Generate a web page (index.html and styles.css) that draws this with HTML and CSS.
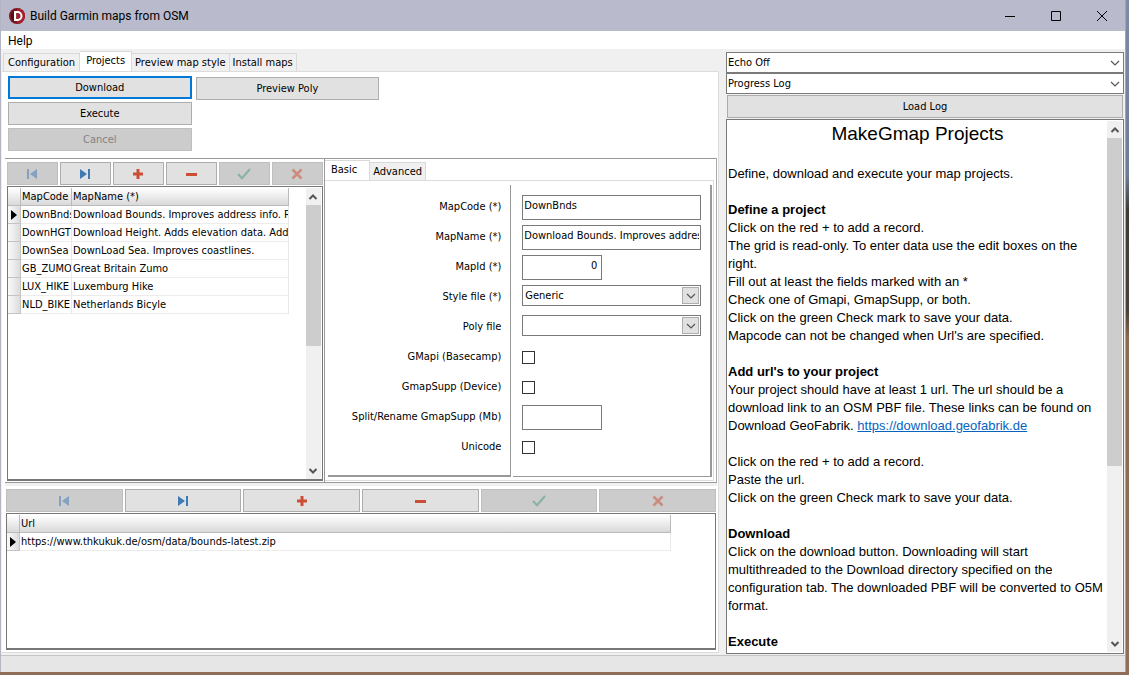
FILE: index.html
```html
<!DOCTYPE html>
<html lang="en">
<head>
<meta charset="utf-8">
<title>Build Garmin maps from OSM</title>
<link rel="stylesheet" href="styles.css">
</head>
<body>
<svg class="defs" aria-hidden="true">
  <symbol id="first" viewBox="0 0 12 12"><path fill="#3f7ab5" d="M1 1h2v10H1zM11 1v10L4 6z"/></symbol>
  <symbol id="last" viewBox="0 0 12 12"><path fill="#3f7ab5" d="M9 1h2v10H9zM1 1v10l7-5z"/></symbol>
  <symbol id="plus" viewBox="0 0 12 12"><path fill="#cb4f36" d="M4.500 1h3v3.500H11v3H7.500V11h-3V7.500H1v-3h3.500z"/></symbol>
  <symbol id="minus" viewBox="0 0 12 12"><path fill="#cb4f36" d="M1 5h11v3H1z"/></symbol>
  <symbol id="check" viewBox="0 0 14 12"><path fill="none" stroke="#439b7c" stroke-width="2" d="M1 6l4 4.200L13 1"/></symbol>
  <symbol id="cross" viewBox="0 0 12 12"><path fill="none" stroke="#cb4f36" stroke-width="2.600" d="M1.500 1.500l9 9M10.500 1.500l-9 9"/></symbol>
  <symbol id="chevron" viewBox="0 0 10 6"><path fill="none" stroke="#555" stroke-width="1.200" d="M1 1l4 4 4-4"/></symbol>
  <symbol id="up" viewBox="0 0 10 8"><path fill="none" stroke="#555" stroke-width="2" d="M1.500 6L5 2.500 8.500 6"/></symbol>
  <symbol id="down" viewBox="0 0 10 8"><path fill="none" stroke="#555" stroke-width="2" d="M1.500 2L5 5.500 8.500 2"/></symbol>
  <symbol id="marker" viewBox="0 0 6 10"><path d="M0 0l6 5-6 5z"/></symbol>
</svg>
<div class="window">
  <header class="titlebar">
    <svg class="logo" viewBox="0 0 16 16" aria-hidden="true"><circle cx="8" cy="8" r="8" fill="#7c1421"/><path d="M8 0a8 8 0 0 1 0 16z" fill="#a51f2c"/><path fill="#4d0c16" d="M2 8a6 6 0 0 1 3-5v10a6 6 0 0 1-3-5z"/><path fill="#fff" fill-rule="evenodd" d="M5 3h3.500a5 5 0 0 1 0 10H5zM7.200 5v6h1.300a3 3 0 0 0 0-6z"/></svg>
    <h1 class="title">Build Garmin maps from OSM</h1>
    <div class="controls">
      <button class="control" aria-label="Minimize"><svg viewBox="0 0 12 12"><path d="M1 6.500h10"/></svg></button>
      <button class="control" aria-label="Maximize"><svg viewBox="0 0 12 12"><path d="M1.500 1.500h9v9h-9z"/></svg></button>
      <button class="control" aria-label="Close"><svg viewBox="0 0 12 12"><path d="M1 1l10 10M11 1L1 11"/></svg></button>
    </div>
  </header>
  <nav class="menubar"><button class="menu">Help</button></nav>
  <main class="main">
    <section class="left">
      <div class="tabs" role="tablist">
        <button class="tab" role="tab">Configuration</button>
        <button class="tab active" role="tab" aria-selected="true">Projects</button>
        <button class="tab" role="tab">Preview map style</button>
        <button class="tab" role="tab">Install maps</button>
      </div>
      <div class="page">
        <div class="actions">
          <div class="action-column">
            <button class="button primary">Download</button>
            <button class="button">Execute</button>
            <button class="button" disabled>Cancel</button>
          </div>
          <div class="action-column second">
            <button class="button">Preview Poly</button>
          </div>
        </div>
        <div class="projects">
          <div class="records">
            <div class="navigator">
              <button class="button" aria-label="First project" disabled><svg class="icon"><use href="#first"/></svg></button>
              <button class="button" aria-label="Last project"><svg class="icon"><use href="#last"/></svg></button>
              <button class="button" aria-label="Add project"><svg class="icon"><use href="#plus"/></svg></button>
              <button class="button" aria-label="Delete project"><svg class="icon"><use href="#minus"/></svg></button>
              <button class="button" aria-label="Save project" disabled><svg class="icon wide"><use href="#check"/></svg></button>
              <button class="button" aria-label="Cancel edit" disabled><svg class="icon"><use href="#cross"/></svg></button>
            </div>
            <div class="gridbox">
              <div class="table-area">
                <table class="grid">
                  <colgroup><col class="col-mark"><col class="col-code"><col></colgroup>
                  <thead><tr><th></th><th>MapCode</th><th>MapName (*)</th></tr></thead>
                  <tbody>
                    <tr><td class="mark"><svg class="marker"><use href="#marker"/></svg></td><td>DownBnds</td><td>Download Bounds. Improves address info. R</td></tr>
                    <tr><td class="mark"></td><td>DownHGT</td><td>Download Height. Adds elevation data. Add</td></tr>
                    <tr><td class="mark"></td><td>DownSea</td><td>DownLoad Sea. Improves coastlines.</td></tr>
                    <tr><td class="mark"></td><td>GB_ZUMO</td><td>Great Britain Zumo</td></tr>
                    <tr><td class="mark"></td><td>LUX_HIKE</td><td>Luxemburg Hike</td></tr>
                    <tr><td class="mark"></td><td>NLD_BIKE</td><td>Netherlands Bicyle</td></tr>
                  </tbody>
                </table>
              </div>
              <div class="scrollbar short">
                <button class="arrow" aria-label="Scroll up"><svg><use href="#up"/></svg></button>
                <div class="track"><div class="thumb"></div></div>
                <button class="arrow" aria-label="Scroll down"><svg><use href="#down"/></svg></button>
              </div>
            </div>
          </div>
          <div class="details">
            <div class="tabs subtabs" role="tablist">
              <button class="tab active" role="tab" aria-selected="true">Basic</button>
              <button class="tab" role="tab">Advanced</button>
            </div>
            <form class="form">
              <div class="labels">
                <label for="code">MapCode (*)</label>
                <label for="name">MapName (*)</label>
                <label for="mapid">MapId (*)</label>
                <label for="style">Style file (*)</label>
                <label for="poly">Poly file</label>
                <label for="gmapi">GMapi (Basecamp)</label>
                <label for="gmapsupp">GmapSupp (Device)</label>
                <label for="split">Split/Rename GmapSupp (Mb)</label>
                <label for="unicode">Unicode</label>
              </div>
              <div class="fields">
                <div class="field"><input class="text" id="code" type="text" value="DownBnds"></div>
                <div class="field"><input class="text" id="name" type="text" value="Download Bounds. Improves address info."></div>
                <div class="field"><input class="text small" id="mapid" type="text" value="0"></div>
                <div class="field"><div class="combo boxed"><select id="style"><option>Generic</option></select><span class="drop"><svg><use href="#chevron"/></svg></span></div></div>
                <div class="field"><div class="combo boxed"><select id="poly"><option></option></select><span class="drop"><svg><use href="#chevron"/></svg></span></div></div>
                <div class="field"><input class="check" id="gmapi" type="checkbox"></div>
                <div class="field"><input class="check" id="gmapsupp" type="checkbox"></div>
                <div class="field"><input class="text small" id="split" type="text"></div>
                <div class="field"><input class="check" id="unicode" type="checkbox"></div>
              </div>
            </form>
          </div>
        </div>
        <div class="urls">
          <div class="navigator">
            <button class="button" aria-label="First url" disabled><svg class="icon"><use href="#first"/></svg></button>
            <button class="button" aria-label="Last url"><svg class="icon"><use href="#last"/></svg></button>
            <button class="button" aria-label="Add url"><svg class="icon"><use href="#plus"/></svg></button>
            <button class="button" aria-label="Delete url"><svg class="icon"><use href="#minus"/></svg></button>
            <button class="button" aria-label="Save url" disabled><svg class="icon wide"><use href="#check"/></svg></button>
            <button class="button" aria-label="Cancel url edit" disabled><svg class="icon"><use href="#cross"/></svg></button>
          </div>
          <div class="gridbox url-box">
            <table class="grid">
              <colgroup><col class="col-mark"><col></colgroup>
              <thead><tr><th></th><th>Url</th></tr></thead>
              <tbody><tr><td class="mark"><svg class="marker"><use href="#marker"/></svg></td><td>https://www.thkukuk.de/osm/data/bounds-latest.zip</td></tr></tbody>
            </table>
          </div>
        </div>
      </div>
    </section>
    <aside class="right">
      <div class="combo"><select aria-label="Echo"><option>Echo Off</option></select><span class="drop"><svg><use href="#chevron"/></svg></span></div>
      <div class="combo"><select aria-label="Log"><option>Progress Log</option></select><span class="drop"><svg><use href="#chevron"/></svg></span></div>
      <button class="button load">Load Log</button>
      <div class="memo">
        <article class="help">
          <h2>MakeGmap Projects</h2>
          <p>Define, download and execute your map projects.</p>
          <h3>Define a project</h3>
          <p>Click on the red + to add a record.<br>The grid is read-only. To enter data use the edit boxes on the right.<br>Fill out at least the fields marked with an *<br>Check one of Gmapi, GmapSupp, or both.<br>Click on the green Check mark to save your data.<br>Mapcode can not be changed when Url's are specified.</p>
          <h3>Add url's to your project</h3>
          <p>Your project should have at least 1 url. The url should be a download link to an OSM PBF file. These links can be found on Download GeoFabrik. <a href="https://download.geofabrik.de">https://download.geofabrik.de</a></p>
          <p>Click on the red + to add a record.<br>Paste the url.<br>Click on the green Check mark to save your data.</p>
          <h3>Download</h3>
          <p>Click on the download button. Downloading will start multithreaded to the Download directory specified on the configuration tab. The downloaded PBF will be converted to O5M format.</p>
          <h3>Execute</h3>
        </article>
        <div class="scrollbar long">
          <button class="arrow" aria-label="Scroll up"><svg><use href="#up"/></svg></button>
          <div class="track"><div class="thumb"></div></div>
          <button class="arrow" aria-label="Scroll down"><svg><use href="#down"/></svg></button>
        </div>
      </div>
    </aside>
  </main>
  <footer class="status"></footer>
</div>
</body>
</html>
```

FILE: styles.css
```css
* { box-sizing: border-box; }

body {
  margin: 0;
  height: 100vh;
  padding: 0 3px 3px 0;
  background: linear-gradient(#7f8ba5 0%, #6d7d98 26%, #3f3c38 31%, #46413a 46%, #8a6a50 50%, #8f6f57 100%);
  color: #000;
  font: 11px/14px "DejaVu Sans Condensed", "DejaVu Sans", sans-serif;
}

button, input, select { font: inherit; color: inherit; margin: 0; }
button { padding: 0; border: 0; background: none; }
.defs { display: none; }

.window {
  display: flex;
  flex-direction: column;
  height: 100%;
  border-left: 1px solid #b4b5c4;
  border-right: 1px solid #a4a5b4;
  background: #f0f0f0;
}

.titlebar {
  display: flex;
  align-items: center;
  height: 31px;
  padding-left: 8px;
  background: #b9bacb;
}
.logo { width: 16px; height: 16px; }
.title { flex: 1; margin: 0 0 0 5px; font: 12px/16px Roboto, sans-serif; }
.controls { display: flex; }
.control { display: grid; place-items: center; width: 46px; height: 30px; }
.control svg { width: 12px; height: 12px; fill: none; stroke: #000; stroke-width: 1; }

.menubar { height: 18px; padding: 0 7px; background: #fff; }
.menu { font: 12px/20px Roboto, sans-serif; }

.main {
  flex: 1;
  min-height: 0;
  display: grid;
  grid-template-columns: 717fr 398fr;
  gap: 7px;
  padding: 2px 1px 0 1px;
}
.left, .right { display: flex; flex-direction: column; min-width: 0; min-height: 0; }

.tabs { display: flex; align-items: flex-end; height: 20px; padding-left: 1px; }
.tab { height: 18px; padding: 1px 3px 0; border: 1px solid #d9d9d9; border-bottom: 0; border-left: 0; background: #f0f0f0; white-space: nowrap; }
.tab:first-child { padding: 1px 4px 0; border-left: 1px solid #d9d9d9; }
.tab.active { height: 20px; padding: 0 6px 1px; background: #fff; }

.page {
  flex: 1;
  min-height: 0;
  display: flex;
  flex-direction: column;
  margin-bottom: 2px;
  padding: 3px 1px 1px 3px;
  border: 1px solid #dcdcdc;
  border-left: 0;
  background: #fff;
}

.button { display: grid; place-items: center; height: 23px; border: 1px solid #adadad; background: #e1e1e1; }
.button.primary { border: 2px solid #0078d7; }
.button:disabled { border-color: #bfbfbf; background: #ccc; color: #838383; }

.actions { display: flex; gap: 4px; padding: 1px 3px 7px; }
.action-column { flex: 0 0 26%; display: grid; gap: 3px; align-content: start; }
.action-column.second { padding-top: 1px; }

.projects { flex: 1; min-height: 0; display: flex; border-top: 1px solid #999; border-right: 1px solid #aaa; border-bottom: 1px solid #999; }
.records { flex: 0 0 45%; min-width: 0; display: flex; flex-direction: column; padding: 3px 1px 1px 2px; border-right: 1px solid #999; }
.navigator { display: grid; grid-template-columns: repeat(6, 1fr); gap: 2px; margin-bottom: 1px; }
.icon { width: 12px; height: 12px; }
.icon.wide { width: 14px; }
.button:disabled .icon { opacity: .5; }

.gridbox { flex: 1; min-height: 0; display: flex; border: 1px solid #777; border-bottom-width: 2px; padding: 1px 1px 0 0; background: #fff; }
.table-area { flex: 1; min-width: 0; padding-right: 17px; }
.grid { width: 100%; table-layout: fixed; border-collapse: separate; border-spacing: 0; align-self: flex-start; }
.col-mark { width: 13px; }
.col-code { width: 51px; }
.grid th, .grid td { height: 18px; padding: 1px 0 0 1px; overflow: hidden; white-space: nowrap; text-align: left; font-weight: normal; border-right: 1px solid #e8e8e8; border-bottom: 1px solid #ececec; }
.grid th { border-color: #bbb; background: linear-gradient(#fff, #d9d9d9); }
.grid .mark { padding: 0; text-align: center; border-color: #c4c4c4; background: linear-gradient(90deg, #fafafa, #dcdcdc); }
.marker { display: block; width: 6px; height: 10px; margin: auto; }

.scrollbar { flex: 0 0 15px; display: flex; flex-direction: column; background: #f0f0f0; }
.arrow { display: grid; place-items: center; height: 17px; }
.arrow svg { width: 10px; height: 8px; }
.track { flex: 1; }
.thumb { background: #cdcdcd; }
.short .thumb { height: 55%; }
.long .thumb { height: 66%; }

.details { flex: 1; min-width: 0; display: flex; flex-direction: column; padding: 1px 2px 1px 0; }
.subtabs { padding-left: 0; }
.subtabs .tab.active { padding-right: 12px; border-left: 0; }
.form { flex: 1; min-height: 0; display: grid; grid-template-columns: 12fr 13fr; gap: 2px; margin: 0; padding: 4px 1px 3px 3px; border: 1px solid #dcdcdc; border-left: 0; }
.labels, .fields { display: grid; min-width: 0; grid-auto-rows: 30px; align-content: start; padding-top: 10px; }
.labels { padding-right: 9px; border-right: 1px solid #999; border-bottom: 2px solid #999; text-align: right; line-height: 24px; white-space: nowrap; }
.fields { padding-left: 9px; padding-right: 9px; border-right: 2px solid #999; border-bottom: 1px solid #999; }
.text { display: block; width: 100%; height: 25px; padding: 0 1px 4px; border: 1px solid #7a7a7a; border-radius: 0; background: #fff; }
.text.small { width: 80px; padding-right: 4px; text-align: right; }
.check { appearance: none; display: block; width: 13px; height: 13px; margin-top: 6px; border: 1px solid #333; background: #fff; }

.combo { display: flex; height: 21px; border: 1px solid #7a7a7a; background: #fff; }
.combo select { flex: 1; min-width: 0; padding: 0 1px; border: 0; appearance: none; background: #fff; }
.drop { display: grid; place-items: center; width: 17px; }
.drop svg { width: 10px; height: 6px; }
.boxed { padding: 1px; }
.boxed .drop { border: 1px solid #adadad; background: #e1e1e1; }

.urls { flex: 0 0 168px; display: flex; flex-direction: column; padding: 3px 1px 1px; border-top: 3px solid #f0f0f0; }
.url-box { padding-right: 44px; }

.right { padding-top: 1px; padding-bottom: 1px; }
.load { margin: 1px; }
.memo { flex: 1; min-height: 0; display: flex; border: 1px solid #777; background: #fff; padding: 1px; }
.help { flex: 1; min-width: 0; overflow: hidden; font: 13px/18px "Liberation Sans", Arial, sans-serif; }
.help h2 { margin: 0 0 18px; font-size: 19px; line-height: 26px; font-weight: normal; text-align: center; }
.help h3 { margin: 0; font-size: 13px; }
.help p { margin: 0 0 18px; }
.help a { color: #0563c1; }

.status { height: 17px; border-top: 1px solid #c4c4c4; background: #e6e6e6; }
```
